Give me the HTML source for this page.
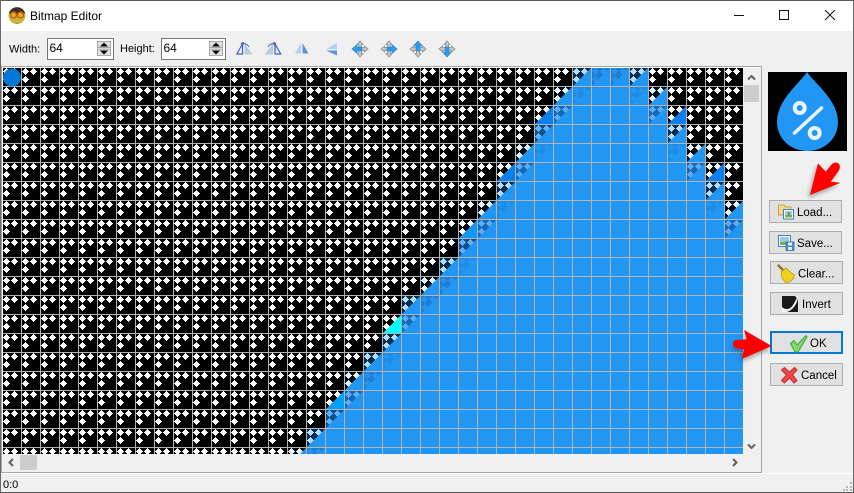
<!DOCTYPE html>
<html>
<head>
<meta charset="utf-8">
<title>Bitmap Editor</title>
<style>
html,body{margin:0;padding:0;background:#f0f0f0;width:854px;height:493px;overflow:hidden}
svg{display:block;position:absolute;left:0;top:0}
text{font-family:"Liberation Sans",sans-serif;fill:#000}
</style>
</head>
<body>
<svg width="854" height="493" viewBox="0 0 854 493" xmlns="http://www.w3.org/2000/svg">
<defs>
<path id="d" shape-rendering="crispEdges" d="M3 0h1v1h1v1h1v1h1v1h-1v1h-1v1h-1v1h-1v-1h-1v-1h-1v-1h-1v-1h1v-1h1v-1h1z"/>
<g id="ds"><use href="#d"/><use href="#d" x="8"/><use href="#d" y="8"/></g>
<pattern id="cell" x="3" y="68" width="19" height="19" patternUnits="userSpaceOnUse">
<rect width="19" height="19" fill="#000"/><use href="#ds" fill="#fff"/>
</pattern>
<pattern id="grid" x="3" y="68" width="19" height="19" patternUnits="userSpaceOnUse">
<rect x="18" width="1" height="19" fill="#b4b4b4" shape-rendering="crispEdges"/>
<rect y="18" width="19" height="1" fill="#b4b4b4" shape-rendering="crispEdges"/>
</pattern>
<g id="A"><rect width="18" height="18" fill="#0b2c4a"/><use href="#ds" fill="#b4dcfb"/><path d="M0 18L18 0V18Z" fill="#2196f3"/></g>
<g id="A2"><rect width="18" height="18" fill="#10508c"/><use href="#ds" fill="#62b1f1"/><path d="M0 18L18 0V18Z" fill="#2196f3"/></g>
<g id="B"><rect width="18" height="18" fill="#020a12"/><use href="#ds" fill="#e3f2fe"/><path d="M0 18L18 0V18Z" fill="#2196f3"/></g>
<g id="C"><rect width="18" height="18" fill="#1669ba"/><use href="#ds" fill="#5cacf0"/><path d="M0 18L18 0V18Z" fill="#2196f3"/></g>
<g id="M"><rect width="18" height="18" fill="#1b7fd4"/><use href="#ds" fill="#2a90ea"/><path d="M0 18L18 0V18Z" fill="#2196f3"/></g>
<g id="F"><rect width="18" height="18" fill="#1e8ae4"/><use href="#ds" fill="#2196f3"/><path d="M0 18L18 0V18Z" fill="#2196f3"/></g>
<g id="D"><rect width="18" height="18" fill="#000"/><use href="#ds" fill="#fff"/><path d="M0 18L18 0V18Z" fill="#0a80f0"/></g>
<g id="D2"><rect width="18" height="18" fill="#000"/><use href="#ds" fill="#fff"/><path d="M0 18L18 0V18Z" fill="#1496f5"/></g>
<g id="D3"><rect width="18" height="18" fill="#000"/><use href="#ds" fill="#fff"/><path d="M0 18L18 0V18Z" fill="#00a0ff"/></g>
<g id="E"><rect width="18" height="18" fill="#000"/><use href="#ds" fill="#fff"/><path d="M0 18L18 0V18Z" fill="#00ffff"/></g>
<clipPath id="cv"><rect x="3" y="68" width="740" height="386"/></clipPath>
<g id="cross">
<path d="M8 0L11 3.5H9.5V6.5H12.5V5L16 8L12.5 11V9.5H9.5V12.5H11L8 16L5 12.5H6.5V9.5H3.5V11L0 8L3.5 5V6.5H6.5V3.5H5Z" fill="#c8c8c8" stroke="#8c8c8c" stroke-width=".8"/>
</g>
<filter id="sh" x="-30%" y="-30%" width="170%" height="170%"><feGaussianBlur stdDeviation="2"/></filter>
</defs>

<!-- window -->
<rect width="854" height="493" fill="#f0f0f0"/>
<rect x="1" y="1" width="852" height="30" fill="#fff"/>
<rect width="854" height="1" fill="#5a5a5a"/>
<rect y="0" width="1" height="493" fill="#6a6a6a"/>
<rect x="853" y="0" width="1" height="493" fill="#6a6a6a"/>
<rect y="492" width="854" height="1" fill="#5a5a5a"/>

<!-- title icon -->
<circle cx="17" cy="15.5" r="8.5" fill="#c9b53a"/>
<path d="M8.8 13.5A8.5 8.5 0 0 1 25.2 13.5Z" fill="#3a3328"/>
<circle cx="13.5" cy="15" r="3" fill="#e8b020" stroke="#c8501a" stroke-width="1.3"/>
<circle cx="20.5" cy="15" r="3" fill="#e8b020" stroke="#c8501a" stroke-width="1.3"/>
<path d="M11 21Q17 25 23 21L17 24Z" fill="#8a8a30"/>
<text x="30" y="20" font-size="12">Bitmap Editor</text>

<!-- window buttons -->
<rect x="734" y="15" width="10" height="1" fill="#111" shape-rendering="crispEdges"/>
<rect x="779.5" y="10.5" width="9" height="9" fill="none" stroke="#111" shape-rendering="crispEdges"/>
<path d="M825 10L835 20M835 10L825 20" stroke="#111" stroke-width="1" fill="none"/>

<!-- toolbar -->
<text x="9" y="52.5" font-size="11">Width:</text>
<rect x="47.5" y="38.5" width="66" height="21" fill="#fff" stroke="#767676" shape-rendering="crispEdges"/>
<text x="49.5" y="52" font-size="12">64</text>
<rect x="97.5" y="41.5" width="13" height="6" fill="#e1e1e1" stroke="#a8a8a8" shape-rendering="crispEdges"/>
<rect x="97.5" y="49" width="13" height="6.5" fill="#e1e1e1" stroke="#a8a8a8" shape-rendering="crispEdges"/>
<path d="M104 42.5L108 46.5H100Z M100 50.5H108L104 54.5Z" fill="#000"/>

<text x="120" y="52" font-size="11">Height:</text>
<rect x="161.5" y="38.5" width="64" height="21" fill="#fff" stroke="#767676" shape-rendering="crispEdges"/>
<text x="163.5" y="52" font-size="12">64</text>
<rect x="209.5" y="41.5" width="13" height="6" fill="#e1e1e1" stroke="#a8a8a8" shape-rendering="crispEdges"/>
<rect x="209.5" y="49" width="13" height="6.5" fill="#e1e1e1" stroke="#a8a8a8" shape-rendering="crispEdges"/>
<path d="M216 42.5L220 46.5H212Z M212 50.5H220L216 54.5Z" fill="#000"/>

<!-- toolbar icons -->
<g>
<path d="M236.8 54L242.5 44V54Z" fill="#eef3fa" stroke="#3f5fc0" stroke-width="1.2"/>
<path d="M245 54H251.5L245 45Z" fill="#b9cfe2" stroke="#9fb8d0" stroke-width=".6"/>
<path d="M249 47Q247 43 242 43.5" fill="none" stroke="#3f5fc0" stroke-width="1"/>
<path d="M243.5 41.5L240.5 43.5L243.5 45.5Z" fill="#3f5fc0"/>
<path d="M265.8 54H272.5V45Z" fill="#b9cfe2" stroke="#9fb8d0" stroke-width=".6"/>
<path d="M275 44V54H280.7Z" fill="#eef3fa" stroke="#3f5fc0" stroke-width="1.2"/>
<path d="M268 47Q270 43 275 43.5" fill="none" stroke="#3f5fc0" stroke-width="1"/>
<path d="M273.5 41.5L276.5 43.5L273.5 45.5Z" fill="#3f5fc0"/>
<path d="M301 43V53.5H295Z" fill="#b3cff5"/>
<path d="M302.5 43V53.5H308.5Z" fill="#5f92de"/>
<path d="M337 43V49H326Z" fill="#b3cff5"/>
<path d="M337 50.5V55.5L326 50.5Z" fill="#5f92de"/>
</g>
<use href="#cross" x="352" y="41"/>
<path d="M352 49L357 44.5V47H362V51H357V53.5Z" fill="#2f9be8" stroke="#1a80d0" stroke-width=".5"/>
<use href="#cross" x="381" y="41"/>
<path d="M397 49L392 44.5V47H387V51H392V53.5Z" fill="#2f9be8" stroke="#1a80d0" stroke-width=".5"/>
<use href="#cross" x="410" y="41"/>
<path d="M418 41L422.5 46H420V51H416V46H413.5Z" fill="#2f9be8" stroke="#1a80d0" stroke-width=".5"/>
<use href="#cross" x="439" y="41"/>
<path d="M447 57L442.5 52H445V47H449V52H451.5Z" fill="#2f9be8" stroke="#1a80d0" stroke-width=".5"/>

<!-- editor frame -->
<rect x="1.5" y="66.5" width="760" height="406" fill="#f0f0f0" stroke="#a6a6a6" shape-rendering="crispEdges"/>
<rect x="2" y="67" width="759" height="1" fill="#fff"/>
<rect x="2" y="67" width="1" height="387" fill="#fff"/>

<!-- canvas -->
<g clip-path="url(#cv)" shape-rendering="crispEdges">
<rect x="3" y="68" width="741" height="387" fill="url(#cell)"/>
<g fill="#2196f3">
<rect x="573" y="68" width="75" height="19"/>
<rect x="554" y="87" width="113" height="19"/>
<rect x="535" y="106" width="151" height="38"/>
<rect x="516" y="144" width="189" height="19"/>
<rect x="497" y="163" width="227" height="38"/>
<rect x="478" y="201" width="266" height="19"/>
<rect x="459" y="220" width="285" height="38"/>
<rect x="440" y="258" width="304" height="19"/>
<rect x="421" y="277" width="323" height="19"/>
<rect x="402" y="296" width="342" height="19"/>
<rect x="383" y="315" width="361" height="38"/>
<rect x="364" y="353" width="380" height="19"/>
<rect x="345" y="372" width="399" height="19"/>
<rect x="326" y="391" width="418" height="38"/>
<rect x="307" y="429" width="437" height="19"/>
<rect x="288" y="448" width="456" height="19"/>
</g>
</g>
<g clip-path="url(#cv)">
<!-- r0 -->
<use href="#A" x="573" y="68"/><use href="#M" x="592" y="68"/><use href="#M" x="611" y="68"/><use href="#A" x="630" y="68"/>
<!-- r1 -->
<use href="#B" x="554" y="87"/><use href="#F" x="573" y="87"/><use href="#F" x="630" y="87"/><use href="#B" x="649" y="87"/>
<!-- r2 -->
<use href="#D" x="535" y="106"/><use href="#C" x="554" y="106"/><use href="#C" x="649" y="106"/><use href="#D" x="668" y="106"/>
<!-- r3 -->
<use href="#A2" x="535" y="125"/><use href="#A" x="668" y="125"/>
<!-- r4 -->
<use href="#B" x="516" y="144"/><use href="#F" x="535" y="144"/><use href="#F" x="668" y="144"/><use href="#B" x="687" y="144"/>
<!-- r5 -->
<use href="#D" x="497" y="163"/><use href="#C" x="516" y="163"/><use href="#C" x="687" y="163"/><use href="#D" x="706" y="163"/>
<!-- r6 -->
<use href="#A" x="497" y="182"/><use href="#A" x="706" y="182"/>
<!-- r7 -->
<use href="#B" x="478" y="201"/><use href="#F" x="497" y="201"/><use href="#F" x="706" y="201"/><use href="#B" x="725" y="201"/>
<!-- r8 -->
<use href="#D2" x="459" y="220"/><use href="#C" x="478" y="220"/><use href="#C" x="725" y="220"/>
<!-- r9 -->
<use href="#A2" x="459" y="239"/>
<!-- r10 -->
<use href="#A" x="440" y="258"/><use href="#F" x="459" y="258"/>
<!-- r11 -->
<use href="#B" x="421" y="277"/><use href="#M" x="440" y="277"/>
<!-- r12 -->
<use href="#A" x="402" y="296"/><use href="#M" x="421" y="296"/>
<!-- r13 -->
<use href="#E" x="383" y="315"/><use href="#C" x="402" y="315"/>
<!-- r14 -->
<use href="#A" x="383" y="334"/>
<!-- r15 -->
<use href="#A" x="364" y="353"/><use href="#F" x="383" y="353"/>
<!-- r16 -->
<use href="#B" x="345" y="372"/><use href="#M" x="364" y="372"/>
<!-- r17 -->
<use href="#D3" x="326" y="391"/><use href="#C" x="345" y="391"/>
<!-- r18 -->
<use href="#A2" x="326" y="410"/>
<!-- r19 -->
<use href="#A" x="307" y="429"/>
<!-- r20 -->
<use href="#B" x="288" y="448"/><use href="#M" x="307" y="448"/>
<rect x="3" y="68" width="741" height="387" fill="url(#grid)"/>
<circle cx="12" cy="77.5" r="9" fill="#0078d7"/>
</g>

<!-- scrollbars -->
<rect x="744" y="85" width="15" height="17" fill="#cdcdcd"/>
<path d="M748 79.5L751.5 76L755 79.5" fill="none" stroke="#606060" stroke-width="2"/>
<path d="M748 444.5L751.5 448L755 444.5" fill="none" stroke="#606060" stroke-width="2"/>
<rect x="20" y="455" width="17" height="15" fill="#cdcdcd"/>
<path d="M13 459L9.5 462.5L13 466" fill="none" stroke="#606060" stroke-width="2"/>
<path d="M733 459L736.5 462.5L733 466" fill="none" stroke="#606060" stroke-width="2"/>

<!-- preview -->
<rect x="768" y="72" width="79" height="79" fill="#000"/>
<path d="M807 72C815 84 838 100 838 122C838 139 824 151 807.5 151C791 151 777 139 777 122C777 100 799 84 807 72Z" fill="#2196f3"/>
<path d="M821.5 108L794.5 133" stroke="#eaf4fd" stroke-width="3.5" stroke-linecap="round"/>
<circle cx="799.7" cy="108" r="5" fill="none" stroke="#eaf4fd" stroke-width="4"/>
<circle cx="814.7" cy="133" r="5" fill="none" stroke="#eaf4fd" stroke-width="4"/>

<!-- buttons -->
<g fill="#e1e1e1" stroke="#adadad" shape-rendering="crispEdges">
<rect x="769.5" y="200.5" width="72" height="22"/>
<rect x="769.5" y="231.5" width="72" height="22"/>
<rect x="770.5" y="261.5" width="72" height="22"/>
<rect x="770.5" y="292.5" width="72" height="22"/>
<rect x="770.5" y="363.5" width="72" height="22"/>
</g>
<rect x="771" y="332" width="71" height="21" fill="#e1e1e1" stroke="#0078d7" stroke-width="2" shape-rendering="crispEdges"/>

<text x="797" y="216" font-size="11.5">Load...</text>
<text x="797" y="247" font-size="11.5">Save...</text>
<text x="798" y="277.5" font-size="11.5">Clear...</text>
<text x="802" y="308" font-size="11.5">Invert</text>
<text x="810" y="347" font-size="11.5">OK</text>
<text x="801" y="379" font-size="11.5">Cancel</text>

<!-- load icon -->
<path d="M778.5 205H784L785.5 207H791V215H778.5Z" fill="#f5d98a" stroke="#c9a050"/>
<rect x="783.5" y="209.5" width="10" height="9.5" fill="#fff" stroke="#3b7fc4"/>
<rect x="785" y="211" width="7" height="4" fill="#9cc8ee"/>
<rect x="785" y="215" width="7" height="2.5" fill="#7cb342"/>
<rect x="788" y="212" width="1.5" height="4" fill="#5c8a2a"/>
<!-- save icon -->
<rect x="778.5" y="235.5" width="12" height="11" fill="#fff" stroke="#3b7fc4"/>
<rect x="780" y="237" width="9" height="5" fill="#9cc8ee"/>
<rect x="780" y="242" width="9" height="3" fill="#7cb342"/>
<rect x="786" y="242" width="8" height="8.5" fill="#4a90c8" stroke="#2a6aa0" stroke-width=".7"/>
<rect x="788" y="242.5" width="4" height="3" fill="#eaf3fa"/>
<rect x="788" y="247" width="4" height="3" fill="#dfe9f2"/>
<!-- clear icon -->
<path d="M778.5 265.5L784 271" stroke="#9a6a28" stroke-width="2.4" stroke-linecap="round"/>
<path d="M781.500 271.500L786 268L794.500 275.500C793.500 280.500 788 283.500 785.500 282C783 280.500 780.500 276 781.500 271.500Z" fill="#f0d020" stroke="#b09810" stroke-width=".8"/>
<!-- invert icon -->
<rect x="782" y="296" width="16" height="16" fill="#1a1a1a"/>
<path d="M782 312V307C785 310 790 310 793 305C795 302 796 299 798 296V298C797 304 793 310 787 312Z" fill="#eee"/>
<path d="M782 312H785L782 309Z M798 296H795L798 299Z" fill="#fff"/>
<!-- ok icon -->
<path d="M790.5 343.5L794 340.5L797 345L806 335.5L807 337L798 352H795Z" fill="#7fdc6a" stroke="#3aa040" stroke-width="1"/>
<!-- cancel icon -->
<path d="M781.5 370L784.5 367.5L789.5 372L794.5 367.5L797 370L792.5 375L797 380.5L794 383L789.5 378L784.5 383L781.5 380.5L786.5 375Z" fill="#f0474a" stroke="#c82a2c" stroke-width="1"/>

<!-- red arrows -->
<path d="M810 195L818 163.3L825.7 171.7L834 162.3L839.7 167L837 172L830.7 181.7L840.7 182.7Z" fill="#444" opacity=".45" filter="url(#sh)" transform="translate(-2 3)"/>
<path d="M810 195L818 163.3L825.7 171.7L832 164Q836 161 839 164Q841 167 838.5 171L830.7 181.7L840.7 182.7Z" fill="#fe0000"/>
<path d="M771.7 346L744 330L746.7 339.3L735 340Q733 344 735 348L742.3 350L741.7 359Z" fill="#444" opacity=".45" filter="url(#sh)" transform="translate(-1 3)"/>
<path d="M771.7 346L744 330L746.7 339.3L736 340Q733 341 733 344Q733 347 736 348L744 349.5L741.7 359Z" fill="#fe0000"/>

<!-- status bar -->
<rect x="1" y="473" width="852" height="1" fill="#fff"/>
<text x="3" y="488" font-size="11">0:0</text>
<g fill="#b8b8b8" shape-rendering="crispEdges">
<rect x="850" y="482" width="2" height="2"/>
<rect x="846" y="486" width="2" height="2"/><rect x="850" y="486" width="2" height="2"/>
<rect x="843" y="489" width="2" height="2"/><rect x="846" y="489" width="2" height="2"/><rect x="850" y="489" width="2" height="2"/>
</g>
</svg>
</body>
</html>
